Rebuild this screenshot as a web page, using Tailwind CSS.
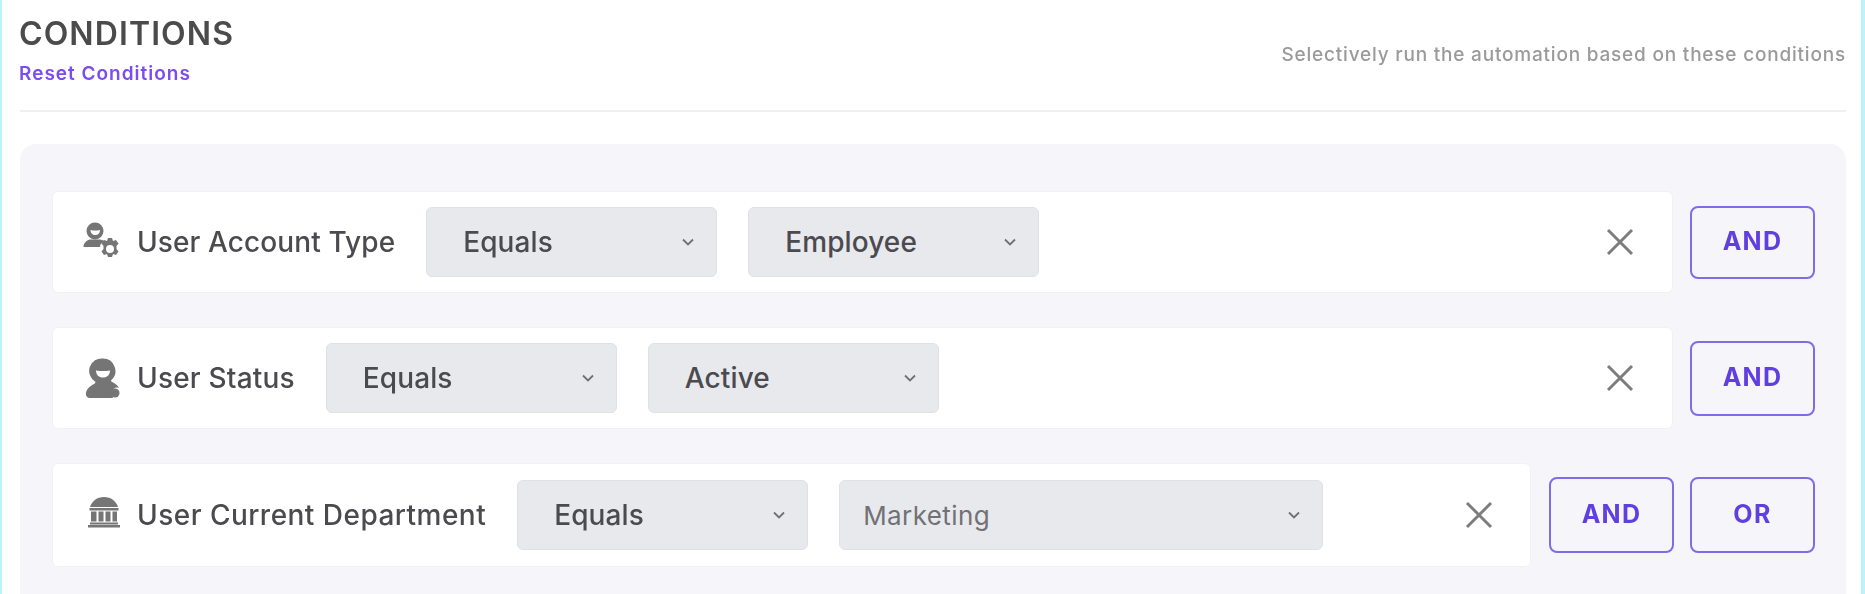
<!DOCTYPE html>
<html lang="en">
<head>
  <meta charset="UTF-8">
  <title>Conditions</title>
  <script src="https://cdn.jsdelivr.net/npm/@tailwindcss/browser@4"></script>
</head>
<body class="bg-white font-['Inter',sans-serif] text-[#4a4a4f]">
  <div class="w-[1865px] h-[594px] overflow-hidden border-l-2 border-r-4 border-[#b9f3fb] pl-[18px] pr-[15px] flex flex-col blur-[0.4px]">

    <header class="h-[112px] shrink-0 border-b-2 border-[#f0f0f3] flex justify-between">
      <div class="pt-[15px]">
        <h1 class="text-[32px] leading-[38px] font-semibold tracking-[1.1px] text-[#4b4b4b] -ml-px">CONDITIONS</h1>
        <a class="block mt-[9px] text-[19px] leading-[24px] font-semibold tracking-[1px] text-[#7c4dee] -ml-px">Reset Conditions</a>
      </div>
      <p class="pt-[43px] text-[19px] leading-[24px] font-medium tracking-[0.8px] text-[#9a9a9a]">Selectively run the automation based on these conditions</p>
    </header>

    <section class="mt-[32px] flex-1 bg-[#f5f5fa] rounded-t-[16px] pl-[32px] pr-[31px] pt-[47px] flex flex-col gap-[34px]">

      <div class="flex items-center gap-[17px]">
        <div class="flex-1 h-[102px] bg-white rounded-[6px] border border-[#f0f0f6] flex items-center pl-[30px] pr-[38px]">
          <svg class="w-[40px] h-[40px] shrink-0" viewBox="0 0 40 40" fill="#757575">
            <path fill-rule="evenodd" d="M12 0.500a8.500 8.500 0 1 1 0 17a8.500 8.500 0 0 1 0-17ZM7.500 8c3 .8 6 .8 9.500 0c0 3-2 5-4.700 5s-4.800-2-4.800-5Z"/>
            <path d="M0.500 25c0-4 3-6.500 6-7.500h11c2 .5 3 1 4 2c-3 1-4.500 3-4.500 5.500Z"/>
            <path fill-rule="evenodd" d="M25 16h4l1 3l3-1l2.500 3.500l-2 2.500v3l2 2.500l-2.500 3.500l-3-1l-1 3h-4l-1-3l-3 1l-2.500-3.500l2-2.500v-3l-2-2.500l2.500-3.500l3 1ZM27 23a4 4 0 1 0 0 8a4 4 0 0 0 0-8Z"/>
          </svg>
          <span class="ml-[14px] text-[28px] font-medium tracking-[0.1px] whitespace-nowrap">User Account Type</span>
          <div class="ml-[31px] w-[291px] h-[70px] shrink-0 bg-[#e8e9ed] border border-[#e0e1e5] rounded-[6px] flex items-center justify-between pl-[36px] pr-[20px] text-[28px] font-medium tracking-[0.1px]">
            Equals
            <svg class="w-[16px] h-[16px]" viewBox="0 0 16 16" fill="none" stroke="#6f6f75" stroke-width="1.800"><path d="M3 5.500l5 5l5-5"/></svg>
          </div>
          <div class="ml-[31px] w-[291px] h-[70px] shrink-0 bg-[#e8e9ed] border border-[#e0e1e5] rounded-[6px] flex items-center justify-between pl-[36px] pr-[20px] text-[28px] font-medium tracking-[0.1px]">
            Employee
            <svg class="w-[16px] h-[16px]" viewBox="0 0 16 16" fill="none" stroke="#6f6f75" stroke-width="1.800"><path d="M3 5.500l5 5l5-5"/></svg>
          </div>
          <svg class="ml-auto w-[28px] h-[28px] shrink-0" viewBox="0 0 28 28" fill="none" stroke="#7d7d7d" stroke-width="3"><path d="M2 2l24 24M26 2L2 26"/></svg>
        </div>
        <button class="w-[125px] h-[73px] shrink-0 border-2 border-[#7f6ce8] rounded-[8px] text-[25px] font-bold tracking-[1.3px] text-[#5f3fe0]">AND</button>
      </div>

      <div class="flex items-center gap-[17px]">
        <div class="flex-1 h-[102px] bg-white rounded-[6px] border border-[#f0f0f6] flex items-center pl-[30px] pr-[38px]">
          <svg class="w-[40px] h-[40px] shrink-0" viewBox="0 0 40 40" fill="#757575">
            <path fill-rule="evenodd" d="M20 0.500a12.500 12.500 0 0 1 8 22c0 1 1 1.500 3 2.500c2 1 4 3 5 5c-5-2-9 3-6 10H7c-3 0-4.500-2-4-5c.500-4 4-7 8-9c1-.500 2-1.500 1-2.500A12.500 12.500 0 0 1 20 0.500ZM13 12.500c4 .8 10 .8 14 0c0 4.500-3 7-7 7s-7-2.500-7-7Z"/>
            <circle cx="32" cy="35" r="4.500"/>
          </svg>
          <span class="ml-[14px] text-[28px] font-medium tracking-[0.2px] whitespace-nowrap">User Status</span>
          <div class="ml-[31px] w-[291px] h-[70px] shrink-0 bg-[#e8e9ed] border border-[#e0e1e5] rounded-[6px] flex items-center justify-between pl-[36px] pr-[20px] text-[28px] font-medium tracking-[0.1px]">
            Equals
            <svg class="w-[16px] h-[16px]" viewBox="0 0 16 16" fill="none" stroke="#6f6f75" stroke-width="1.800"><path d="M3 5.500l5 5l5-5"/></svg>
          </div>
          <div class="ml-[31px] w-[291px] h-[70px] shrink-0 bg-[#e8e9ed] border border-[#e0e1e5] rounded-[6px] flex items-center justify-between pl-[36px] pr-[20px] text-[28px] font-medium tracking-[0.1px]">
            Active
            <svg class="w-[16px] h-[16px]" viewBox="0 0 16 16" fill="none" stroke="#6f6f75" stroke-width="1.800"><path d="M3 5.500l5 5l5-5"/></svg>
          </div>
          <svg class="ml-auto w-[28px] h-[28px] shrink-0" viewBox="0 0 28 28" fill="none" stroke="#7d7d7d" stroke-width="3"><path d="M2 2l24 24M26 2L2 26"/></svg>
        </div>
        <button class="w-[125px] h-[75px] shrink-0 border-2 border-[#7f6ce8] rounded-[8px] text-[25px] font-bold tracking-[1.3px] text-[#5f3fe0]">AND</button>
      </div>

      <div class="flex items-center gap-[16px]">
        <div class="flex-1 h-[104px] mr-[2px] bg-white rounded-[6px] border border-[#f0f0f6] flex items-center pl-[30px] pr-[37px]">
          <svg class="w-[40px] h-[40px] shrink-0" viewBox="0 0 40 40" fill="#757575">
            <path d="M21 2c7 0 12 4 14 10H7c2-6 7-10 14-10Z"/>
            <path d="M6.500 13h29v2.500h-29Z"/>
            <path d="M8 16.500h5.500v10H8ZM15.500 16.500h5v10h-5ZM22.500 16.500h5v10h-5ZM29.500 16.500H34v10h-4.500Z"/>
            <path d="M7 27.500h28v2H7ZM5 30h32v2.500H5Z"/>
          </svg>
          <span class="ml-[14px] text-[28px] font-medium tracking-[0.47px] whitespace-nowrap">User Current Department</span>
          <div class="ml-[31px] w-[291px] h-[70px] shrink-0 bg-[#e8e9ed] border border-[#e0e1e5] rounded-[6px] flex items-center justify-between pl-[36px] pr-[20px] text-[28px] font-medium tracking-[0.1px]">
            Equals
            <svg class="w-[16px] h-[16px]" viewBox="0 0 16 16" fill="none" stroke="#6f6f75" stroke-width="1.800"><path d="M3 5.500l5 5l5-5"/></svg>
          </div>
          <div class="ml-[31px] w-[484px] h-[70px] shrink-0 bg-[#e8e9ed] border border-[#e0e1e5] rounded-[6px] flex items-center justify-between pl-[23px] pr-[20px] text-[26px] tracking-[0.4px] text-[#717176]">
            Marketing
            <svg class="w-[16px] h-[16px]" viewBox="0 0 16 16" fill="none" stroke="#6f6f75" stroke-width="1.800"><path d="M3 5.500l5 5l5-5"/></svg>
          </div>
          <svg class="ml-auto w-[28px] h-[28px] shrink-0" viewBox="0 0 28 28" fill="none" stroke="#7d7d7d" stroke-width="3"><path d="M2 2l24 24M26 2L2 26"/></svg>
        </div>
        <button class="w-[125px] h-[76px] shrink-0 border-2 border-[#7f6ce8] rounded-[8px] text-[25px] font-bold tracking-[1.3px] text-[#5f3fe0]">AND</button>
        <button class="w-[125px] h-[76px] shrink-0 border-2 border-[#7f6ce8] rounded-[8px] text-[25px] font-bold tracking-[1.3px] text-[#5f3fe0]">OR</button>
      </div>

    </section>
  </div>
</body>
</html>
